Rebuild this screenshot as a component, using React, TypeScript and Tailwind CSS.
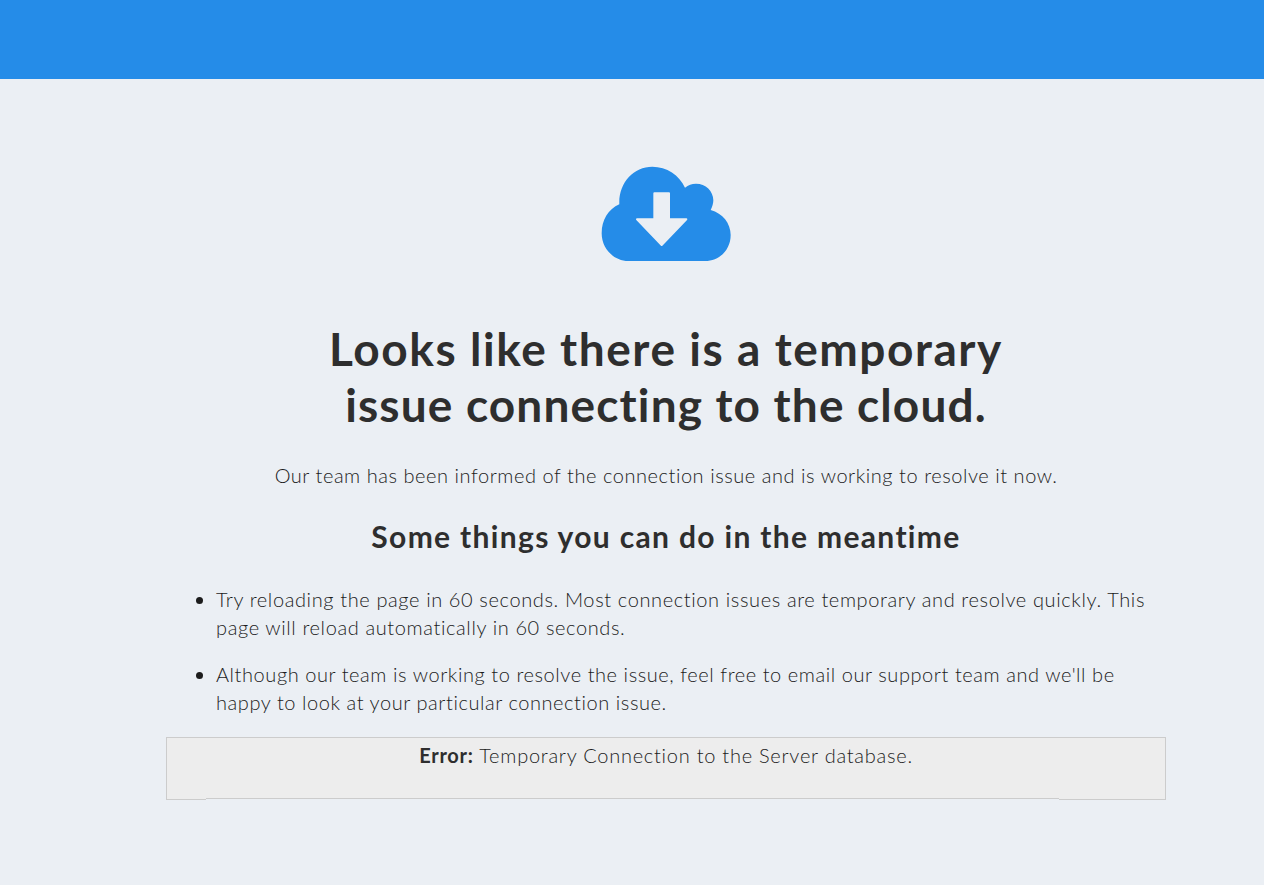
import React from 'react';

const App: React.FC = () => {
  return (
    <div className="min-h-[885px] bg-[#ebeff4] font-['Lato',sans-serif] text-[#2e2e2e]">
      <div className="h-[79px] bg-[#258ce8]"></div>

      <div className="ml-[166px] w-[1000px]">
        {/* Cloud icon */}
        <div className="flex justify-center pt-[76px] pr-[2px]">
          <svg viewBox="0 0 450 345" className="h-[115px] w-[150px] text-[#258ce8]">
            <path
              fill="currentColor"
              d="M115 318 C70 318 35 280 35 235 C35 195 55 162 88 148 C85 85 130 35 187 35 C230 35 268 60 285 98 C295 90 305 86 318 86 C347 86 370 108 370 136 C370 145 367 155 362 165 C398 175 422 205 422 240 C422 285 388 318 345 318 Z"
            />
            <path
              fill="#ebeff4"
              stroke="#ebeff4"
              strokeWidth="6"
              strokeLinejoin="round"
              d="M193 115 H237 V193 H289 L215 270 L141 193 H193 Z"
            />
          </svg>
        </div>

        <h1 className="mt-[51px] text-center text-[46px] leading-[56px] font-bold">
          <span className="tracking-[1.56px]">Looks like there is a temporary</span>
          <br />
          <span className="tracking-[1.15px]">issue connecting to the cloud.</span>
        </h1>

        <p className="mt-[28px] text-center text-[20px] leading-[28px] font-light tracking-[0.55px] text-[#1c1c1c]">
          Our team has been informed of the connection issue and is working to resolve it now.
        </p>

        <h2 className="mt-[29px] text-center text-[30px] leading-[36px] font-bold tracking-[1.33px]">
          Some things you can do in the meantime
        </h2>

        <ul className="mt-[31px] list-disc pl-[50px] pr-[20px] text-[20px] leading-[28px] font-light text-[#1c1c1c]">
          <li className="tracking-[0.62px]">
            Try reloading the page in 60 seconds. Most connection issues are temporary and resolve quickly. This page
            will reload automatically in 60 seconds.
          </li>
          <li className="mt-[19px] tracking-[0.57px]">
            Although our team is working to resolve the issue, feel free to email our support team and we'll be happy
            to look at your particular connection issue.
          </li>
        </ul>

        {/* Error box */}
        <div className="relative mt-[21px] h-[63px] border border-[#cccccc] bg-[#ededed] text-center text-[20px] leading-[34px] font-light tracking-[0.75px] text-[#1c1c1c]">
          <strong className="font-bold text-[#2e2e2e]">Error:</strong> Temporary Connection to the Server database.
          <div className="absolute right-[106px] -bottom-px left-[39px] h-[2px] border-t border-[#cccccc] bg-[#ebeff4]"></div>
        </div>
      </div>
    </div>
  );
};

export default App;
